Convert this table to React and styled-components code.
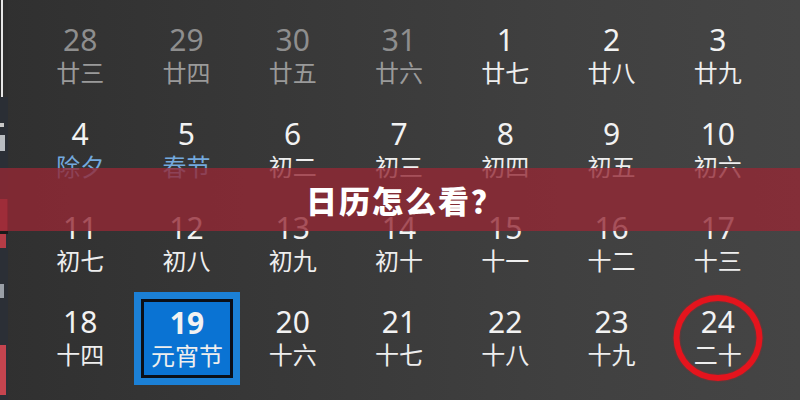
import React from "react";
import styled, { createGlobalStyle, css } from "styled-components";

const Global = createGlobalStyle`
  html, body { margin: 0; padding: 0; background: #3a3a3a; overflow: hidden; }
  * { box-sizing: border-box; }
`;

const Screen = styled.div`
  position: relative;
  width: 800px;
  height: 400px;
  display: flex;
  overflow: hidden;
  background: linear-gradient(90deg, #303030 0%, #383838 35%, #404040 70%, #454545 100%);
  font-family: "Noto Sans", "Open Sans", "Noto Sans CJK SC", sans-serif;
`;

const EdgeStrip = styled.div`
  width: 8px;
  height: 400px;
  display: flex;
  flex-direction: column;
  flex-shrink: 0;
`;

const EdgeSeg = styled.div`
  height: ${(p) => p.h}px;
  width: ${(p) => p.w || 8}px;
  background: ${(p) => p.c};
`;

const Grid = styled.div`
  margin-left: 19px;
  margin-top: 9px;
  width: 744px;
  display: grid;
  grid-template-columns: repeat(7, 1fr);
  grid-auto-rows: 94px;
  align-content: start;
`;

const Cell = styled.div`
  position: relative;
  display: flex;
  flex-direction: column;
  align-items: center;
  justify-content: center;
  gap: 2px;
  ${(p) =>
    p.selected &&
    css`
      margin: 1px 0 0 1px;
      background: #0a73d3;
      border: 7px solid #1b80d6;
      box-shadow: inset 0 0 0 3px #0b0f18;
    `}
`;

const Day = styled.div`
  font-family: "Noto Sans", "Open Sans", sans-serif;
  font-size: 30px;
  line-height: 30px;
  height: 30px;
  font-weight: ${(p) => (p.bold ? 700 : 400)};
  color: ${(p) => (p.dim ? "#8e8e8e" : "#f2f2f2")};
`;

const Lunar = styled.div`
  font-family: "Noto Sans CJK SC", sans-serif;
  font-size: 24px;
  line-height: 30px;
  height: 30px;
  font-weight: 400;
  color: ${(p) => (p.tone === "dim" ? "#9a9a9a" : p.tone === "fest" ? "#74a9de" : "#eeeeee")};
`;

const Ring = styled.div`
  position: absolute;
  left: 50%;
  top: 50%;
  width: 89px;
  height: 86px;
  transform: translate(-50%, -50%);
  border: 6px solid #e5141d;
  border-radius: 50%;
  box-shadow: 0 0 2px rgba(229, 20, 29, 0.6), inset 0 0 2px rgba(229, 20, 29, 0.6);
  pointer-events: none;
`;

const Banner = styled.div`
  position: absolute;
  left: 0;
  right: 0;
  top: 168px;
  height: 63px;
  background: rgba(148, 40, 52, 0.8);
  display: flex;
  align-items: center;
  justify-content: center;
`;

const Title = styled.h1`
  margin: 0 0 0 10px;
  font-family: "Noto Sans CJK SC", sans-serif;
  font-weight: 900;
  font-size: 31px;
  letter-spacing: 2px;
  color: #ffffff;
  line-height: 1;
`;

const rows = [
  [
    ["28", "廿三", "dim"],
    ["29", "廿四", "dim"],
    ["30", "廿五", "dim"],
    ["31", "廿六", "dim"],
    ["1", "廿七"],
    ["2", "廿八"],
    ["3", "廿九"],
  ],
  [
    ["4", "除夕", "fest"],
    ["5", "春节", "fest"],
    ["6", "初二"],
    ["7", "初三"],
    ["8", "初四"],
    ["9", "初五"],
    ["10", "初六"],
  ],
  [
    ["11", "初七"],
    ["12", "初八"],
    ["13", "初九"],
    ["14", "初十"],
    ["15", "十一"],
    ["16", "十二"],
    ["17", "十三"],
  ],
  [
    ["18", "十四"],
    ["19", "元宵节", "selected"],
    ["20", "十六"],
    ["21", "十七"],
    ["22", "十八"],
    ["23", "十九"],
    ["24", "二十", "circled"],
  ],
];

const edge = [
  { h: 97, c: "linear-gradient(90deg, #2a2a2a 0 1px, #e6e6e6 1px 3px, #2e2e2e 3px)" },
  { h: 26, c: "#2a2e35" },
  { h: 4, c: "linear-gradient(90deg, #c8c8c8 0 4px, #2a2e35 4px)" },
  { h: 8, c: "#2a2e35" },
  { h: 16, c: "linear-gradient(90deg, #b9bdc2 0 5px, #2a2e35 5px)" },
  { h: 48, c: "#2b2f36" },
  { h: 32, c: "linear-gradient(90deg, #c9414c 0 7px, #7e2c35 7px)" },
  { h: 3, c: "#1a1a1a" },
  { h: 14, c: "linear-gradient(90deg, #b53c46 0 6px, #2b2f36 6px)" },
  { h: 36, c: "#2b2f36" },
  { h: 14, c: "linear-gradient(90deg, #9aa0a8 0 4px, #2b2f36 4px)" },
  { h: 47, c: "#2b2f36" },
  { h: 50, c: "linear-gradient(90deg, #c4444f 0 6px, #2b2f36 6px)" },
  { h: 5, c: "#2b2f36" },
];

export default function App() {
  return (
    <>
      <Global />
      <Screen>
        <EdgeStrip>
          {edge.map((s, i) => (
            <EdgeSeg key={i} h={s.h} c={s.c} />
          ))}
        </EdgeStrip>
        <Grid>
          {rows.flat().map(([d, l, kind]) => (
            <Cell key={d + l} selected={kind === "selected"}>
              <Day dim={kind === "dim"} bold={kind === "selected"}>
                {d}
              </Day>
              <Lunar tone={kind === "dim" ? "dim" : kind === "fest" ? "fest" : "plain"}>{l}</Lunar>
              {kind === "circled" && <Ring />}
            </Cell>
          ))}
        </Grid>
        <Banner>
          <Title>日历怎么看？</Title>
        </Banner>
      </Screen>
    </>
  );
}
